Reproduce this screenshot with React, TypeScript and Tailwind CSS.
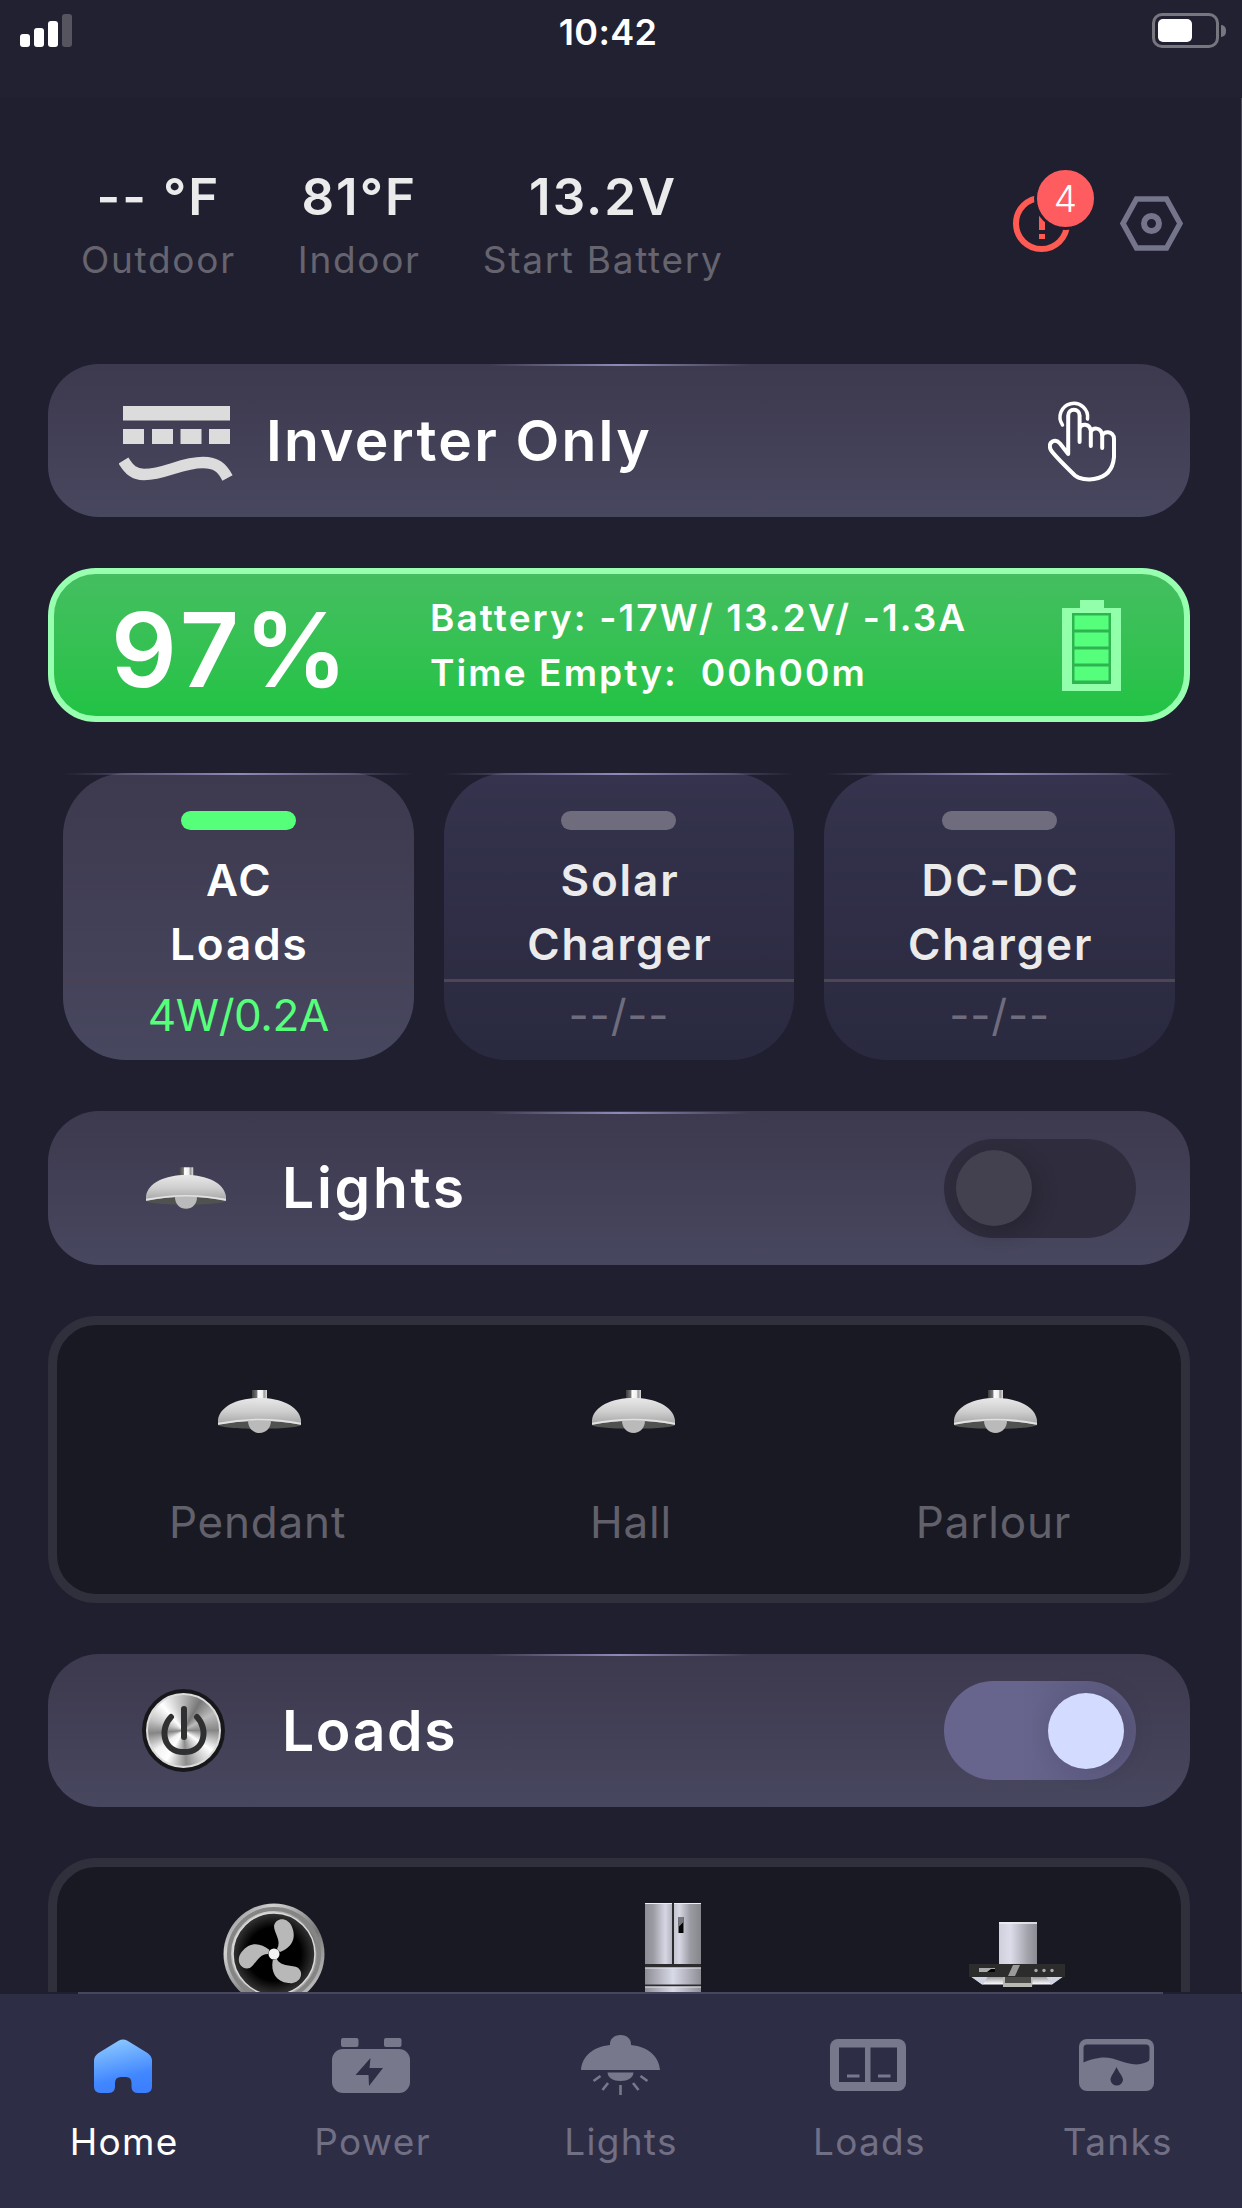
import { clsx } from "clsx";

const stats = [
  { value: "-- °F", label: "Outdoor" },
  { value: "81°F", label: "Indoor" },
  { value: "13.2V", label: "Start Battery" },
];

const sources = [
  { name: ["AC", "Loads"], reading: "4W/0.2A", active: true },
  { name: ["Solar", "Charger"], reading: "--/--", active: false },
  { name: ["DC-DC", "Charger"], reading: "--/--", active: false },
];

const lights = ["Pendant", "Hall", "Parlour"];

const InverterIcon = () => (
  <svg width="114" height="78" viewBox="0 0 114 78" fill="#dcdcdc">
    <path d="M4 0h107v14.500H4zM4 23h21v15H4zM33 23h21v15H33zM61.500 23h21v15h-21zM90 23h21v15H90z" />
    <path
      d="M4.500 54.500C10 63.500 15 68.500 25 68.500C46 68.500 62 56.500 84 56.500C97 56.500 103 61.500 108.500 72"
      fill="none"
      stroke="#dcdcdc"
      strokeWidth="11.500"
    />
  </svg>
);

const TouchIcon = () => (
  <svg width="70" height="82" viewBox="0 0 70 82" fill="none" stroke="#fff" strokeWidth="4" strokeLinecap="round" strokeLinejoin="round">
    <path d="M14.500 25A13.800 13.800 0 1 1 39.500 19" strokeWidth="3.500" />
    <path d="M31.600 42V15.500a5.700 5.700 0 0 0-11.400 0V54L12 43.500C7 38 0 42 2.400 49C3.500 52 11 60 27 75.500C31 79 40 80 46 79C59 77 65 69 66 57V39C66 30.500 54.500 30.500 54.200 36.500V48M54.200 36C54 27 43.500 26.500 42.800 32.500V46M42.800 31C42 23.500 32.500 22.500 31.600 29" />
  </svg>
);

const ChargeIcon = () => (
  <svg width="59" height="91" viewBox="0 0 59 91">
    <path d="M18 0h24v8h17v83H0V8h18z" fill="#92ffab" />
    <rect x="10" y="13" width="39" height="71" fill="#2fb550" />
    <path d="M12.500 15.500h34v14h-34zM12.500 32.500h34v14h-34zM12.500 49.500h34v14h-34zM12.500 66.500h34v14h-34z" fill="#55ff7c" />
  </svg>
);

const LampIcon = ({ className }: { className?: string }) => (
  <svg className={className} viewBox="0 0 83 43">
    <defs>
      <linearGradient id="shade" x1="0" y1="0" x2="0" y2="1">
        <stop offset="0" stopColor="#e8e8e8" />
        <stop offset="0.5" stopColor="#cecece" />
        <stop offset="1" stopColor="#a3a3a3" />
      </linearGradient>
      <linearGradient id="stem" x1="0" y1="0" x2="1" y2="0">
        <stop offset="0" stopColor="#3c3c3c" />
        <stop offset="0.32" stopColor="#777" />
        <stop offset="0.4" stopColor="#fff" />
        <stop offset="0.7" stopColor="#eee" />
        <stop offset="0.8" stopColor="#999" />
        <stop offset="1" stopColor="#ddd" />
      </linearGradient>
    </defs>
    <path d="M0 35Q41.500 25 83 35C78 40 5 40 0 35Z" fill="#50524f" />
    <rect x="34" y="0" width="15" height="10" fill="url(#stem)" />
    <path d="M0 35V30C2 16 20 8 41.500 8S81 16 83 30V35Q41.500 26 0 35Z" fill="url(#shade)" />
    <path d="M0 33.800Q41.500 25.500 83 33.800" fill="none" stroke="#e2e2e2" strokeWidth="2" />
    <path d="M30 30.500H53C53 38 48 43 41.500 43S30 38 30 30.500Z" fill="#bababa" />
  </svg>
);

const PowerButton = () => (
  <div className="flex size-[83px] items-center justify-center rounded-full bg-[#17171b]">
    <div className="flex size-[75px] items-center justify-center rounded-full border-2 border-[#dcdcdc] bg-[conic-gradient(from_0deg,#b5b5b5,#777_30deg,#bbb_60deg,#868686_90deg,#fff_125deg,#c9c9c9_150deg,#8c8c8c_175deg,#fff_210deg,#f2f2f2_235deg,#858585_265deg,#c8c8c8_290deg,#fff_320deg,#b5b5b5_360deg)]">
      <svg width="46" height="50" viewBox="0 0 46 50" fill="none" stroke="#2f3032" strokeWidth="6" strokeLinecap="round">
        <path d="M23 3V31" />
        <path d="M10 11C-1 22 1 46 23 46S47 22 36 11" />
      </svg>
    </div>
  </div>
);

const FanIcon = () => (
  <svg width="102" height="102" viewBox="-51 -51 102 102">
    <defs>
      <linearGradient id="fanRing" x1="0" y1="0" x2="1" y2="1">
        <stop offset="0" stopColor="#777" />
        <stop offset="0.25" stopColor="#d0d0d0" />
        <stop offset="0.6" stopColor="#777" />
        <stop offset="1" stopColor="#ddd" />
      </linearGradient>
      <radialGradient id="fanCore">
        <stop offset="0.65" stopColor="#000" />
        <stop offset="1" stopColor="#343434" />
      </radialGradient>
    </defs>
    <circle r="50.500" fill="url(#fanRing)" />
    <circle r="45" fill="none" stroke="#858585" strokeWidth="4" />
    <circle r="41" fill="url(#fanCore)" stroke="#dadada" strokeWidth="1.500" />
    {[0, 120, 240].map((angle) => (
      <path
        key={angle}
        transform={`rotate(${angle})`}
        d="M3 -5C8 -13 0 -21 0 -28C2 -37 14 -37 18 -27C23 -15 17 -6 6 -2Z"
        fill="#b8b8b8"
      />
    ))}
    <circle r="5.500" fill="#f1f1f1" />
  </svg>
);

const FridgeIcon = () => (
  <svg width="56" height="102" viewBox="0 0 56 102">
    <defs>
      <linearGradient id="door" x1="0" y1="0" x2="1" y2="0">
        <stop offset="0" stopColor="#8d8d95" />
        <stop offset="0.3" stopColor="#9b9ba3" />
        <stop offset="0.75" stopColor="#d6d7e4" />
        <stop offset="1" stopColor="#b5b5c0" />
      </linearGradient>
      <linearGradient id="doorRight" x1="1" y1="0" x2="0" y2="0">
        <stop offset="0" stopColor="#85858c" />
        <stop offset="0.4" stopColor="#9b9ba3" />
        <stop offset="0.8" stopColor="#d6d7e4" />
        <stop offset="1" stopColor="#c5c5d0" />
      </linearGradient>
      <linearGradient id="drawer" x1="0" y1="0" x2="1" y2="0">
        <stop offset="0" stopColor="#8d8d95" />
        <stop offset="0.5" stopColor="#d9dae8" />
        <stop offset="1" stopColor="#8d8d95" />
      </linearGradient>
    </defs>
    <rect width="56" height="102" fill="#2c2c2f" />
    <rect width="27" height="61" fill="url(#door)" />
    <rect x="29" width="27" height="61" fill="url(#doorRight)" />
    <path d="M0 .500H27M29 .500H56" stroke="#eee" />
    <rect x="33.500" y="14" width="5" height="16" fill="#050505" />
    <path d="M33.500 14h5v5l-5 5z" fill="#77777c" />
    <rect y="64.500" width="56" height="17" fill="url(#drawer)" />
    <rect y="83.500" width="56" height="18" fill="url(#drawer)" />
    <path d="M0 65H56M0 84H56" stroke="#e6e6ee" />
  </svg>
);

const HoodIcon = () => (
  <svg width="96" height="66" viewBox="0 0 96 66">
    <defs>
      <linearGradient id="duct" x1="0" y1="0" x2="1" y2="0">
        <stop offset="0" stopColor="#cfd0dc" />
        <stop offset="0.3" stopColor="#dcddea" />
        <stop offset="0.75" stopColor="#a3a3ac" />
        <stop offset="1" stopColor="#8b8b93" />
      </linearGradient>
      <linearGradient id="visor" x1="0" y1="0" x2="0" y2="1">
        <stop offset="0" stopColor="#8f8f91" />
        <stop offset="0.6" stopColor="#d4d4d6" />
        <stop offset="1" stopColor="#fff" />
      </linearGradient>
    </defs>
    <rect x="30" y="0" width="38" height="45" fill="url(#duct)" />
    <path d="M30 1H68" stroke="#f2f2f2" strokeWidth="1.500" />
    <path d="M1 54H95L83 62.500H13Z" fill="url(#visor)" />
    <path d="M1 54H19L14 62.500ZM95 54H77L82 62.500Z" fill="#d0d4e2" />
    <rect x="0" y="42" width="96" height="13" fill="#2c2c2c" />
    <path d="M44 43H51L46 54H39Z" fill="#9a9a9a" />
    <rect x="10" y="46" width="16" height="4" fill="#aaa" />
    <path d="M18 50L22 47H26V50Z" fill="#000" />
    <circle cx="67" cy="48.500" r="1.700" fill="#aaa" />
    <circle cx="75" cy="48.500" r="1.700" fill="#aaa" />
    <circle cx="83" cy="48.500" r="1.700" fill="#aaa" />
    <path d="M34 55H64L63 65H34Z" fill="#b9b9b4" />
    <path d="M36 55H62V61H36Z" fill="#4a4a48" />
  </svg>
);

const HomeIcon = () => (
  <svg className="mt-[2px]" width="58" height="54" viewBox="0 0 58 54">
    <defs>
      <linearGradient id="home" x1="0.2" y1="0" x2="0.45" y2="1">
        <stop offset="0" stopColor="#8fcbff" />
        <stop offset="0.75" stopColor="#4187ff" />
        <stop offset="1" stopColor="#3d80ff" />
      </linearGradient>
    </defs>
    <path
      d="M24.500 1.800Q29 -1 33.500 1.800L53.500 14Q58 17 58 22V47.500Q58 54 51.500 54H43.500Q37.500 54 37.500 47.500V44Q37.500 38 32 38H27Q21 38 21 44V47.500Q21 54 15 54H6.500Q0 54 0 47.500V22Q0 17 4.500 14Z"
      fill="url(#home)"
    />
  </svg>
);

const BatteryIcon = () => (
  <svg className="mt-[2px]" width="78" height="56" viewBox="0 0 78 56">
    <rect x="9" width="17.500" height="9" rx="2" fill="#78788d" />
    <rect x="52" width="17.500" height="9" rx="2" fill="#78788d" />
    <rect y="11" width="78" height="44" rx="11" fill="#78788d" />
    <path d="M38.500 20L23.500 37H36.500L37 48L51 30H37.500Z" fill="#2e2d46" />
  </svg>
);

const PendantIcon = () => (
  <svg className="ml-[2px]" width="79" height="60" viewBox="0 0 79 60" fill="#78788d">
    <path d="M0 35C1 21 12 12 29 10V9C29 4 33 0 39.500 0S50 4 50 9V10C67 12 78 21 79 35Z" />
    <path d="M26.500 37.500H52.500C52 43 47 46 39.500 46S27 43 26.500 37.500Z" />
    <path d="M39.500 50V60M27 48L21.500 55M19.500 41L12.500 46M52 48L57.500 55M59.500 41L66.500 46" fill="none" stroke="#78788d" strokeWidth="2.600" />
  </svg>
);

const SwitchIcon = () => (
  <svg width="76" height="52" viewBox="0 0 76 52">
    <rect width="76" height="52" rx="8" fill="#78788d" />
    <path d="M9 8.500H35V43H9zM40.500 8.500H67V43H40.500z" fill="#2e2d46" />
    <path d="M17 35.500H29.500V38.500H17zM48 35.500H60.500V38.500H48z" fill="#78788d" />
  </svg>
);

const TankIcon = () => (
  <svg width="75" height="52" viewBox="0 0 75 52">
    <rect width="75" height="52" rx="8" fill="#78788d" />
    <path d="M4.500 9Q4.500 5.500 8 5.500H67Q70.500 5.500 70.500 9V20Q70.500 22 68 23C50 31 38 16 20 19Q11 20 4.500 23.500Z" fill="#2e2d46" />
    <path d="M37.500 28C40 34 44 37 44 41A6.300 6.300 0 0 1 31.500 41C31.500 37 35 34 37.500 28Z" fill="#2e2d46" />
  </svg>
);

const tabs = [
  { label: "Home", icon: <HomeIcon />, active: true },
  { label: "Power", icon: <BatteryIcon /> },
  { label: "Lights", icon: <PendantIcon /> },
  { label: "Loads", icon: <SwitchIcon /> },
  { label: "Tanks", icon: <TankIcon /> },
];

// Thin glow that runs along the top edge of a card
const Glow = ({ className }: { className: string }) => (
  <div
    className={clsx(
      "absolute left-1/2 -translate-x-1/2 bg-gradient-to-r from-transparent via-[#8f8bb8] to-transparent",
      className
    )}
  />
);

const Toggle = ({ on }: { on?: boolean }) => (
  <div
    className={clsx(
      "flex h-[99px] w-[192px] items-center rounded-full px-3",
      on ? "justify-end bg-gradient-to-r from-[#67648d] from-40% to-[#5d5a7f]" : "bg-[#2f2d3d]"
    )}
  >
    <div
      className={clsx(
        "size-[76px] rounded-full",
        on
          ? "bg-[#d3dcff] shadow-[6px_0_26px_rgba(30,25,50,0.15)]"
          : "bg-[#43414f] shadow-[6px_6px_20px_rgba(20,18,30,0.3)]"
      )}
    />
  </div>
);

export default function App() {
  return (
    <div className="flex h-[2208px] w-[1242px] flex-col overflow-hidden bg-[#201f30] font-['Inter','Liberation_Sans',sans-serif] text-white">
      {/* Status bar */}
      <div className="flex h-[98px] shrink-0 items-start justify-between bg-[#222132] pt-[13px] pr-4 pl-5">
        <div className="flex h-[34px] w-[80px] items-end gap-1">
          <div className="h-[13px] w-[10px] rounded-[3px] bg-white" />
          <div className="h-[19px] w-[10px] rounded-[3px] bg-white" />
          <div className="h-[26px] w-[10px] rounded-[3px] bg-white" />
          <div className="h-[33px] w-[10px] rounded-[3px] bg-[#56555f]" />
        </div>
        <span className="mt-px text-[36px] leading-[36px] font-semibold tracking-[0.3px]">10:42</span>
        <div className="flex w-[110px] items-center justify-end gap-[2px]">
          <div className="flex h-[35px] w-[67px] rounded-[10px] border-3 border-[#77767f] p-[3px]">
            <div className="h-full w-[34px] rounded-[5px] bg-white" />
          </div>
          <div className="h-[12px] w-[5px] rounded-r-full bg-[#77767f]" />
        </div>
      </div>

      <main className="flex h-[1894px] shrink-0 flex-col overflow-hidden border-r border-[#4a4955]">
        {/* Readings */}
        <header className="flex h-[266px] shrink-0 justify-between pt-[67px] pr-[57px] pl-[81px]">
          <div className="flex gap-[62px]">
            {stats.map((stat) => (
              <div key={stat.label} className="flex flex-col items-center whitespace-nowrap">
                <span className="text-[51px] leading-[63px] font-semibold tracking-[2px] text-[#ebebeb]">{stat.value}</span>
                <span className="text-[37px] leading-[64px] tracking-[1.7px] text-[#65646f]">{stat.label}</span>
              </div>
            ))}
          </div>
          <div className="flex gap-[49px] pt-[30px]">
            <div className="relative size-[57px] rounded-full border-[6px] border-[#ff5b52]">
              <div className="flex h-full flex-col items-center justify-center gap-1">
                <div className="h-[22px] w-[6px] bg-[#ff5b52]" />
                <div className="h-[5px] w-[6px] bg-[#ff5b52]" />
              </div>
              <div className="absolute -top-[34px] left-[15px] flex size-[63px] items-center justify-center rounded-full border-[3px] border-[#201f30] bg-[#ff5c60]">
                <span className="text-[37px] leading-none font-light">4</span>
              </div>
            </div>
            <svg width="65" height="57" viewBox="0 0 65 57" fill="none" stroke="#74748b" strokeWidth="5.500">
              <path d="M17.500 4H47.500L61 28.500L47.500 53H17.500L4 28.500Z" />
              <circle cx="32.500" cy="28.500" r="7.500" strokeWidth="6" />
            </svg>
          </div>
        </header>

        <div className="flex flex-col gap-[51px] pr-[51px] pl-12">
          <section className="relative flex h-[153px] shrink-0 items-center rounded-[51px] bg-gradient-to-b from-[#3d394e] to-[#47475f] pr-[72px] pl-[71px]">
            <Glow className="top-0 h-[2px] w-[260px]" />
            <div className="pt-2">
              <InverterIcon />
            </div>
            <h2 className="ml-[33px] flex-1 text-[57px] leading-none font-semibold tracking-[2.2px]">Inverter Only</h2>
            <TouchIcon />
          </section>

          {/* House battery */}
          <section className="flex h-[154px] shrink-0 items-center rounded-[48px] border-[6px] border-[#99ffb0] bg-gradient-to-b from-[#44be60] to-[#20c344] pr-[63px] pl-[57px]">
            <span className="w-[319px] pt-2 text-[103px] leading-none font-semibold tracking-[5px]">97%</span>
            <div className="flex-1 text-[37px] leading-[55px] font-semibold tracking-[2.1px] whitespace-pre">
              <p>Battery: -17W/ 13.2V/ -1.3A</p>
              <p>{"Time Empty:  00h00m"}</p>
            </div>
            <ChargeIcon />
          </section>

          <section className="grid shrink-0 grid-cols-3">
            {sources.map((source) => (
              <div
                key={source.name.join()}
                className={clsx(
                  "relative mx-[15px] flex h-[287px] flex-col items-center rounded-[63px] bg-gradient-to-b pt-[38px]",
                  source.active ? "from-[#3d394e] to-[#47475f]" : "from-[#35334d] to-[#29293f]"
                )}
              >
                <Glow className="top-0 h-[2px] w-[350px]" />
                <div className={clsx("h-[19px] w-[115px] rounded-full", source.active ? "bg-[#56ff7a]" : "bg-[#6f6d7d]")} />
                <h3
                  className={clsx(
                    "mt-[18px] h-[131px] pl-[2px] text-center text-[44px] leading-[64px] font-semibold tracking-[1.9px]",
                    source.active ? "text-white" : "text-[#ebebeb]"
                  )}
                >
                  {source.name[0]}
                  <br />
                  {source.name[1]}
                </h3>
                <div className={clsx("h-[3px] w-full", source.active ? "bg-[#4a434f]" : "bg-[#4e4753]")} />
                <span
                  className={clsx(
                    "mt-[1px] text-[44px] leading-[64px]",
                    source.active ? "tracking-[-0.4px] text-[#56ff7a]" : "tracking-[0.8px] text-[#6f6d7d]"
                  )}
                >
                  {source.reading}
                </span>
              </div>
            ))}
          </section>

          <section className="relative flex h-[154px] shrink-0 items-center rounded-[51px] bg-gradient-to-b from-[#3d394e] to-[#47475f] pr-[54px] pl-[98px]">
            <Glow className="top-[1px] h-[2px] w-[260px]" />
            <LampIcon className="h-[42px] w-[80px]" />
            <h2 className="ml-[56px] flex-1 pb-[2px] text-[57px] leading-none font-semibold tracking-[2.7px]">Lights</h2>
            <Toggle />
          </section>

          <section className="grid h-[287px] shrink-0 grid-cols-[405px_342px_383px] rounded-[48px] border-[9px] border-[#2f303b] bg-[#191924] pt-[65px]">
            {lights.map((light) => (
              <div key={light} className="flex flex-col items-center">
                <LampIcon className="h-[43px] w-[83px]" />
                <span className="mt-[57px] pr-1 text-[44px] leading-[64px] tracking-[0.8px] text-[#62616b]">{light}</span>
              </div>
            ))}
          </section>

          <section className="relative flex h-[153px] shrink-0 items-center rounded-[51px] bg-gradient-to-b from-[#3d394e] to-[#47475f] pr-[54px] pl-[94px]">
            <Glow className="top-0 h-[2px] w-[260px]" />
            <PowerButton />
            <h2 className="ml-[57px] flex-1 text-[57px] leading-none font-semibold tracking-[1.6px]">Loads</h2>
            <Toggle on />
          </section>

          {/* Continues below the tab bar */}
          <section className="flex h-[287px] shrink-0 items-start rounded-[48px] border-[9px] border-[#2f303b] bg-[#191924] pt-[36px] pl-[166px]">
            <FanIcon />
            <div className="ml-[320px]">
              <FridgeIcon />
            </div>
            <div className="mt-[19px] ml-[268px]">
              <HoodIcon />
            </div>
          </section>
        </div>
      </main>

      <nav className="grid h-[216px] shrink-0 grid-cols-5 bg-[#2e2d46]">
        <div className="col-span-5 flex h-[2px] justify-center bg-[#201f30]">
          <div className="w-[1085px] bg-[#48465f]" />
        </div>
        {tabs.map((tab) => (
          <div key={tab.label} className="flex h-[214px] flex-col items-center">
            <div className="mt-[38px] flex h-[65px] items-center justify-center pr-[3px]">{tab.icon}</div>
            <span
              className={clsx(
                "mt-[13px] text-[37px] leading-[64px] tracking-[1.3px]",
                tab.active ? "text-white" : "text-[#716f84]"
              )}
            >
              {tab.label}
            </span>
          </div>
        ))}
      </nav>
    </div>
  );
}
